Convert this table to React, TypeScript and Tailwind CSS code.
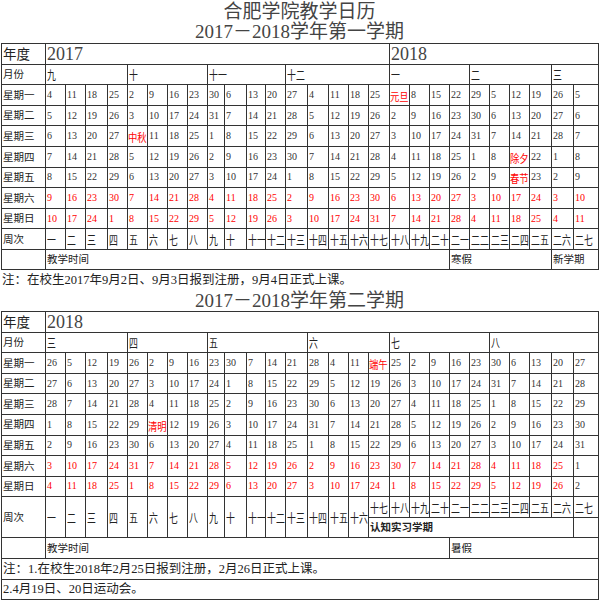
import React from "react";

const widths = [44, 20, 20, 22, 20, 20, 20, 20, 20, 17, 22, 19, 20, 22, 21, 20, 20, 21, 20, 20, 20, 20, 20, 20, 20, 22, 22, 25];

const weekNames = [
  "一", "二", "三", "四", "五", "六", "七", "八", "九", "十",
  "十一", "十二", "十三", "十四", "十五", "十六", "十七", "十八", "十九", "二十",
  "二一", "二二", "二三", "二四", "二五", "二六", "二七",
];

const dayLabels = ["星期一", "星期二", "星期三", "星期四", "星期五", "星期六", "星期日"];

const fallDays = [
  "4 11 18 25 2 9 16 23 30 6 13 20 27 4 11 18 25 元旦 8 15 22 29 5 12 19 26 5",
  "5 12 19 26 3 10 17 24 31 7 14 21 28 5 12 19 26 2 9 16 23 30 6 13 20 27 6",
  "6 13 20 27 中秋 11 18 25 1 8 15 22 29 6 13 20 27 3 10 17 24 31 7 14 21 28 7",
  "7 14 21 28 5 12 19 26 2 9 16 23 30 7 14 21 28 4 11 18 25 1 8 除夕 22 1 8",
  "8 15 22 29 6 13 20 27 3 10 17 24 1 8 15 22 29 5 12 19 26 2 9 春节 23 2 9",
  "9 16 23 30 7 14 21 28 4 11 18 25 2 9 16 23 30 6 13 20 27 3 10 17 24 3 10",
  "10 17 24 1 8 15 22 29 5 12 19 26 3 10 17 24 31 7 14 21 28 4 11 18 25 4 11",
].map((r) => r.split(" "));

const springDays = [
  "26 5 12 19 26 2 9 16 23 30 7 14 21 28 4 11 端午 25 2 9 16 23 30 6 13 20 27",
  "27 6 13 20 27 3 10 17 24 1 8 15 22 29 5 12 19 26 3 10 17 24 31 7 14 21 28",
  "28 7 14 21 28 4 11 18 25 2 9 16 23 30 6 13 20 27 4 11 18 25 1 8 15 22 29",
  "1 8 15 22 29 清明 12 19 26 3 10 17 24 31 7 14 21 28 5 12 19 26 2 9 16 23 30",
  "2 9 16 23 30 6 13 20 27 4 11 18 25 1 8 15 22 29 6 13 20 27 3 10 17 24 31",
  "3 10 17 24 31 7 14 21 28 5 12 19 26 2 9 16 23 30 7 14 21 28 4 11 18 25 1",
  "4 11 18 25 1 8 15 22 29 6 13 20 27 3 10 17 24 1 8 15 22 29 5 12 19 26 2",
].map((r) => r.split(" "));

const serif = "font-['Liberation_Serif','Noto_Sans_CJK_SC',serif]";
const cell = "border border-[#333] p-0 pl-px align-middle leading-none whitespace-nowrap overflow-hidden";
const label = "text-[10.5px] text-[#222] font-['Noto_Sans_CJK_SC',sans-serif]";

function Cols() {
  return (
    <colgroup>
      {widths.map((w, i) => (
        <col key={i} style={{ width: w }} />
      ))}
    </colgroup>
  );
}

function Cjk({ children }: { children: React.ReactNode }) {
  return (
    <span className="inline-block origin-left scale-x-[0.74] text-[12px] text-[#222] font-['Noto_Sans_CJK_SC',sans-serif]">
      {children}
    </span>
  );
}

function YearRow({ years }: { years: [string, number][] }) {
  return (
    <tr className="h-[20.6px]">
      <td className={`${cell} text-[13.5px] text-[#222] font-['Noto_Sans_CJK_SC',sans-serif]`}>年度</td>
      {years.map(([y, span]) => (
        <td key={y} colSpan={span} className={`${cell} ${serif} text-[18px] text-[#444]`}>
          {y}
        </td>
      ))}
    </tr>
  );
}

function MonthRow({ months }: { months: [string, number][] }) {
  return (
    <tr className="h-[20.6px]">
      <td className={`${cell} ${label}`}>月份</td>
      {months.map(([m, span]) => (
        <td key={m} colSpan={span} className={cell}>
          <Cjk>{m}</Cjk>
        </td>
      ))}
    </tr>
  );
}

function DayRows({ days, blackTail }: { days: string[][]; blackTail?: boolean }) {
  return (
    <>
      {days.map((row, r) => (
        <tr key={r} className="h-[20.6px]">
          <td className={`${cell} ${label}`}>{dayLabels[r]}</td>
          {row.map((d, c) => {
            const holiday = isNaN(Number(d));
            const weekend = r >= 5 && !(blackTail && c === row.length - 1);
            if (holiday) {
              return (
                <td key={c} className={`${cell} !pl-0`}>
                  <span className="inline-block origin-left scale-x-[0.85] text-[11px] text-[#f00] font-['Noto_Sans_CJK_SC',sans-serif]">
                    {d}
                  </span>
                </td>
              );
            }
            return (
              <td key={c} className={`${cell} ${serif} text-[10px] ${weekend ? "text-[#f00]" : "text-[#333]"}`}>
                {d}
              </td>
            );
          })}
        </tr>
      ))}
    </>
  );
}

function Title({ children }: { children: React.ReactNode }) {
  return (
    <div className={`${serif} text-center text-[19px] leading-[20px] text-[#444] w-[597px]`}>{children}</div>
  );
}

const small = "text-[10.5px] text-[#222] font-['Noto_Sans_CJK_SC',sans-serif]";
const note = "text-[12.5px] text-[#222] font-['Liberation_Serif','Noto_Sans_CJK_SC',serif]";

export default function App() {
  return (
    <div className="w-[600px] h-[604px] bg-white overflow-hidden pl-px">
      <div className="pt-[2px] pb-px">
        <Title>合肥学院教学日历</Title>
        <Title>2017－2018学年第一学期</Title>
      </div>
      <table className="table-fixed border-collapse w-[597px]">
        <Cols />
        <tbody>
          <YearRow years={[["2017", 17], ["2018", 10]]} />
          <MonthRow months={[["九", 4], ["十", 4], ["十一", 4], ["十二", 5], ["一", 4], ["二", 4], ["三", 2]]} />
          <DayRows days={fallDays} />
          <tr className="h-[20.6px]">
            <td className={`${cell} ${label}`}>周次</td>
            {weekNames.map((w) => (
              <td key={w} className={cell}>
                <Cjk>{w}</Cjk>
              </td>
            ))}
          </tr>
          <tr className="h-[20px]">
            <td className={cell}></td>
            <td colSpan={20} className={`${cell} ${small}`}>教学时间</td>
            <td colSpan={5} className={`${cell} ${small}`}>寒假</td>
            <td colSpan={2} className={`${cell} ${small}`}>新学期</td>
          </tr>
        </tbody>
      </table>
      <div className={`${note} h-[21px] leading-[21px] pl-px`}>注：在校生2017年9月2日、9月3日报到注册，9月4日正式上课。</div>
      <Title>2017－2018学年第二学期</Title>
      <table className="table-fixed border-collapse w-[597px]">
        <Cols />
        <tbody>
          <YearRow years={[["2018", 27]]} />
          <MonthRow months={[["三", 4], ["四", 4], ["五", 5], ["六", 4], ["七", 5], ["八", 5]]} />
          <DayRows days={springDays} blackTail />
          <tr className="h-[20.6px]">
            <td rowSpan={2} className={`${cell} ${label}`}>周次</td>
            {weekNames.slice(0, 16).map((w) => (
              <td key={w} rowSpan={2} className={cell}>
                <Cjk>{w}</Cjk>
              </td>
            ))}
            {weekNames.slice(16).map((w) => (
              <td key={w} className={cell}>
                <Cjk>{w}</Cjk>
              </td>
            ))}
          </tr>
          <tr className="h-[20.6px]">
            <td colSpan={10} className={`${cell} ${small} font-bold`}>认知实习学期</td>
            <td className={cell}></td>
          </tr>
          <tr className="h-[20.6px]">
            <td className={cell}></td>
            <td colSpan={20} className={`${cell} ${small}`}>教学时间</td>
            <td colSpan={7} className={`${cell} ${small}`}>暑假</td>
          </tr>
          <tr className="h-[20.6px]">
            <td colSpan={28} className={`${cell} ${note} pl-[2px]`}>注：1.在校生2018年2月25日报到注册，2月26日正式上课。</td>
          </tr>
          <tr className="h-[20.6px]">
            <td colSpan={28} className={`${cell} ${note} pl-[2px]`}>2.4月19日、20日运动会。</td>
          </tr>
        </tbody>
      </table>
    </div>
  );
}
